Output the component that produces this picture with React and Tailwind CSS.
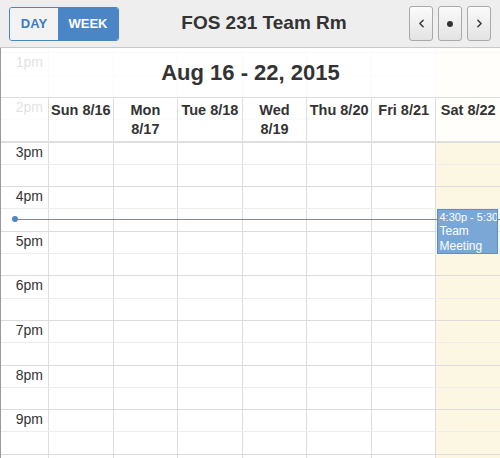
import { ChevronLeft, ChevronRight } from "lucide-react";

const days = [["Sun 8/16"], ["Mon", "8/17"], ["Tue 8/18"], ["Wed", "8/19"], ["Thu 8/20"], ["Fri 8/21"], ["Sat 8/22"]];
const hours = ["1pm", "2pm", "3pm", "4pm", "5pm", "6pm", "7pm", "8pm", "9pm", ""];

const Cells = ({ children }) =>
  days.map((d, i) => (
    <div
      key={d[0]}
      className={
        "relative flex-1 border-l border-[#dedede] " + (i === 6 ? "bg-[#fcf7e2]" : "")
      }
    >
      {children && children(i)}
    </div>
  ));

const EventBlock = () => (
  <div className="absolute left-[1px] right-[2px] top-0 z-10 h-[44.6px] overflow-hidden border border-[#5b8ecb] bg-[#7ba7d6] pl-[1px] text-white">
    <div className="whitespace-nowrap text-[11px] leading-[14px]">4:30p - 5:30p</div>
    <div className="text-[12px] leading-[15px]">Team Meeting</div>
  </div>
);

const SideButton = ({ children }) => (
  <div className="flex h-[35px] w-[24px] items-center justify-center rounded-[3px] border border-[#a9a9a9] bg-linear-to-b from-[#fbfbfb] to-[#e3e3e3] text-[#333]">
    {children}
  </div>
);

export default function App() {
  return (
    <div className="h-[458px] w-[500px] overflow-hidden bg-white font-['Liberation_Sans',Arial,sans-serif] text-[#333]">
      {/* toolbar */}
      <div className="flex h-[48px] items-center border-b border-[#c8c8c8] bg-[#eeeeee] pl-[9px] pr-[9px]">
        <div className="flex h-[34px] w-[110px] overflow-hidden rounded-[3px] border border-[#4a86c5] text-[13px] font-bold">
          <div className="flex w-[48px] items-center justify-center bg-[#f3f3f3] text-[#3b7bbf]">DAY</div>
          <div className="flex flex-1 items-center justify-center bg-[#4a86c5] text-white">WEEK</div>
        </div>
        <div className="flex-1 text-center text-[19px] font-bold">FOS 231 Team Rm</div>
        <div className="flex gap-[5px]">
          <SideButton>
            <ChevronLeft size={13} strokeWidth={2.6} />
          </SideButton>
          <SideButton>
            <div className="h-[6px] w-[6px] rounded-full bg-[#333]" />
          </SideButton>
          <SideButton>
            <ChevronRight size={13} strokeWidth={2.6} />
          </SideButton>
        </div>
      </div>

      {/* week grid */}
      <div className="relative h-[410px] overflow-hidden border-l border-[#9a9a9a]">
        <div className="flex h-[4.4px]">
          <div className="w-[47px]" />
          <Cells />
        </div>
        {hours.map((h, k) => (
          <div key={k}>
            <div className="flex h-[22.3px] border-t border-[#dcdcdc]">
              <div className="w-[47px] pr-[5px] text-right text-[14px] leading-[18px]">{h}</div>
              <Cells />
            </div>
            <div className="flex h-[22.3px] border-t border-[#ececec]">
              <div className="w-[47px]" />
              <Cells>{(i) => (h === "4pm" && i === 6 ? <EventBlock /> : null)}</Cells>
            </div>
          </div>
        ))}

        {/* now indicator */}
        <div className="absolute left-[11px] right-0 top-[168px] flex items-center">
          <div className="h-[6px] w-[6px] rounded-full bg-[#4f86c6]" />
          <div className="h-px flex-1 bg-[#5f92cc]" />
        </div>

        {/* sticky header */}
        <div className="absolute inset-x-0 top-0 z-20">
          <div className="flex h-[49px] items-center justify-center bg-white/85 text-[22px] font-bold">
            Aug 16 - 22, 2015
          </div>
          <div className="flex h-[46px] border-b-2 border-t border-[#dedede] bg-white/85">
            <div className="w-[47px]" />
            {days.map((d) => (
              <div
                key={d[0]}
                className="flex-1 whitespace-nowrap border-l border-[#dedede] pt-[3px] text-center text-[14.5px] font-bold leading-[19px]"
              >
                {d.map((line) => (
                  <div key={line}>{line}</div>
                ))}
              </div>
            ))}
          </div>
        </div>
      </div>
    </div>
  );
}
